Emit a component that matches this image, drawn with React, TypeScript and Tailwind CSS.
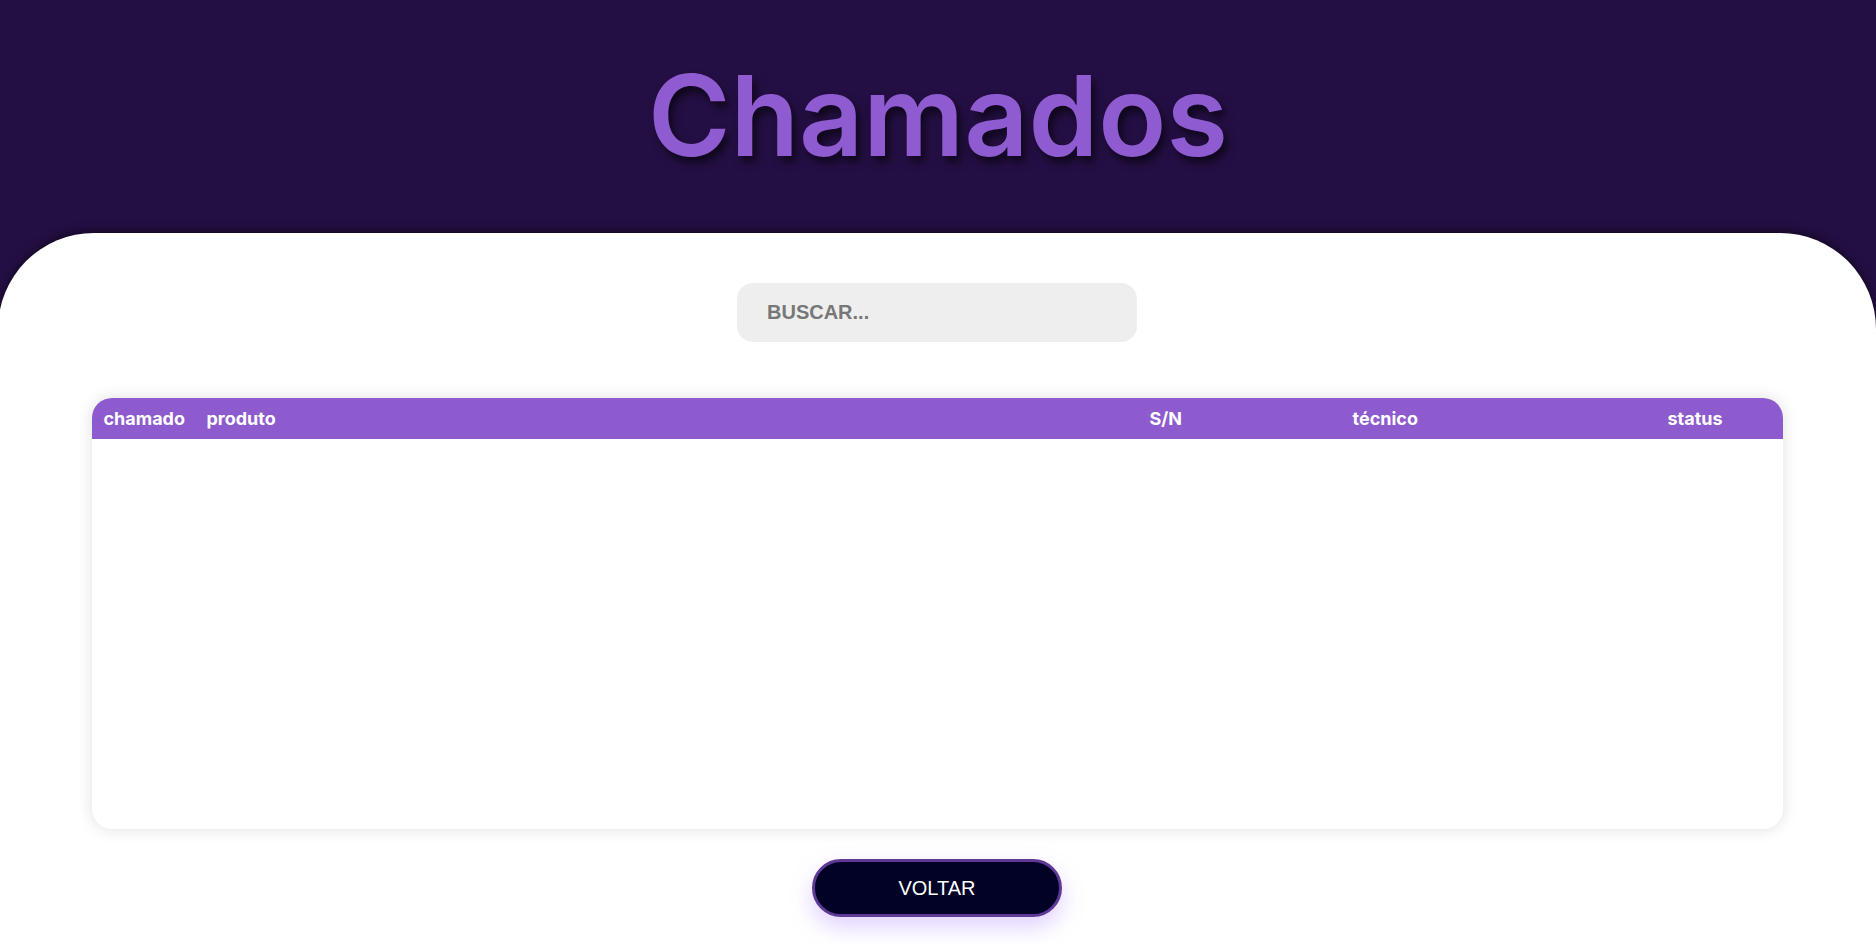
const columns = ["chamado", "produto", "S/N", "técnico", "status"];

function SearchBox() {
  return (
    <input
      type="text"
      placeholder="BUSCAR..."
      className="h-[59px] w-[400px] rounded-[16px] bg-[#eeeeee] pl-[30px] font-['Liberation_Sans',Arial,sans-serif] text-[20px] font-bold text-[#555] outline-none placeholder:text-[#777]"
    />
  );
}

function ChamadosTable() {
  return (
    <div className="h-[431px] w-[1691px] overflow-hidden rounded-[20px] bg-white shadow-[0_0_16px_rgba(0,0,0,0.13)]">
      <div className="grid h-[41px] grid-cols-[103px_943px_203px_315px_1fr] items-center bg-[#8e5bce] font-['Inter',sans-serif] text-[18px] font-bold text-white">
        {columns.map((col) => (
          <div key={col} className="pl-3">
            {col}
          </div>
        ))}
      </div>
      {/* sem chamados ainda */}
    </div>
  );
}

export default function App() {
  return (
    <div className="min-h-screen overflow-hidden bg-[#240f44]">
      <header className="flex h-[233px] items-center justify-center pb-[4px]">
        <h1 className="font-['Inter',sans-serif] text-[112px] leading-none font-semibold text-[#8e5bd0] [text-shadow:4px_6px_9px_rgba(0,0,0,0.6)]">
          Chamados
        </h1>
      </header>

      <main className="-ml-[2px] flex h-[711px] w-[1878px] flex-col items-center rounded-t-[96px] bg-white pt-[50px] shadow-[0_-3px_10px_rgba(0,0,0,0.45)]">
        <SearchBox />

        <div className="mt-[56px]">
          <ChamadosTable />
        </div>

        <button
          type="button"
          className="mt-[30px] h-[58px] w-[250px] rounded-full border-[3px] border-[#5e3895] bg-[#020226] font-['Liberation_Sans',Arial,sans-serif] text-[20px] text-white shadow-[0_10px_22px_rgba(170,120,255,0.35)]"
        >
          VOLTAR
        </button>
      </main>
    </div>
  );
}
